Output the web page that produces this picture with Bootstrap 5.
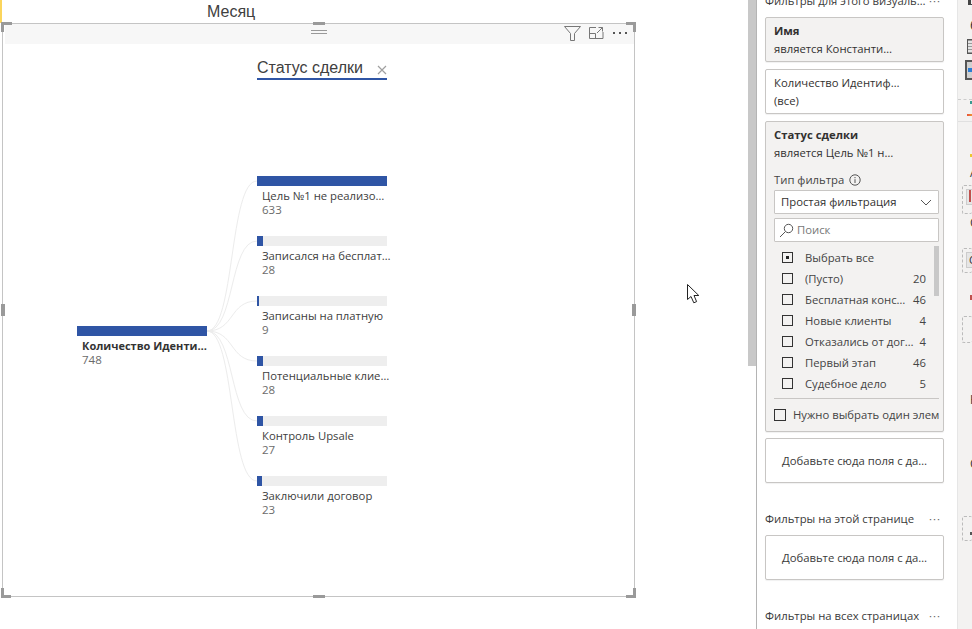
<!DOCTYPE html>
<html lang="ru">
<head>
<meta charset="utf-8">
<title>Дерево декомпозиции</title>
<link href="https://cdn.jsdelivr.net/npm/bootstrap@5.3.0/dist/css/bootstrap.min.css" rel="stylesheet">
<style>
html,body{width:972px;height:629px;overflow:hidden;background:#fff;margin:0}
body{font-family:"Open Sans","Noto Sans",sans-serif;font-size:11.3px;color:#323130;position:relative}
.stagearea{width:748px;height:629px;flex:none;position:relative}
.yellowtick{position:absolute;left:0;top:0;width:2px;height:23px;background:#fbd55c}
.monthtitle{height:23px;padding-left:207px;font:16px/23px "Liberation Sans",sans-serif;color:#404040}
.visframe{width:633px;height:574px;margin-left:2px;border:1px solid #c4c4c4;position:relative}
.vishead{height:20px;margin-left:2px;background:#f7f7f7;position:relative}
.grip{position:absolute;left:306px;top:6px;width:16px;height:4px;border-top:1px solid #999;border-bottom:1px solid #999}
.headicons{position:absolute;left:559px;top:1px}
.hnd{position:absolute;background:#9a9a9a}
.hnd-tlh{left:-2px;top:-2px;width:11px;height:3px}.hnd-tlv{left:-2px;top:-2px;width:3px;height:10px}
.hnd-trh{right:-2px;top:-2px;width:10px;height:3px}.hnd-trv{right:-2px;top:-2px;width:3px;height:10px}
.hnd-blh{left:-2px;bottom:-2px;width:10px;height:3px}.hnd-blv{left:-2px;bottom:-2px;width:3px;height:10px}
.hnd-brh{right:-2px;bottom:-2px;width:10px;height:3px}.hnd-brv{right:-2px;bottom:-2px;width:3px;height:10px}
.hnd-tm{left:310px;top:-2px;width:12px;height:3px}.hnd-bm{left:310px;bottom:-2px;width:12px;height:3px}
.hnd-lm{left:-2px;top:280px;width:4px;height:12px}.hnd-rm{right:-2px;top:280px;width:4px;height:12px}
.treearea{padding-left:74px;position:relative}
.treelines{position:absolute;left:0;top:0;pointer-events:none}
.rootcol{width:130px;margin-top:282px;flex:none;position:relative}
.leafcol{width:130px;margin-left:50px;margin-top:14px;flex:none;position:relative}
.levelhead{height:22px;border-bottom:2px solid #2f55a5;font:16px/19px "Liberation Sans",sans-serif;color:#404040;margin-bottom:96px;position:relative}
.levelclose{position:absolute;right:0;top:7px}
.treenode{height:60px}
.nodebar{height:10px;background:#eee}
.nodefill{height:10px;background:#2f55a5}
.nodename{padding-left:5px;margin-top:3px;font-size:11.3px;line-height:14px;color:#404040;white-space:nowrap}
.rootcol .nodename{font-weight:700;color:#333;font-size:11px}
.nodeval{padding-left:5px;font-size:11.5px;line-height:14px;color:#6b6b6b}
.cursorpos{position:absolute;left:687px;top:284px}
.scrolltrack{width:8px;flex:none}
.scrollthumb{height:366px;background:#c8c8c8}
.filterpane{width:201px;flex:none;border-left:1px solid #b4b4b4;height:629px;overflow:hidden;padding:0 13px 0 8px}
.panehead{display:flex;justify-content:space-between;height:16px;line-height:16px;white-space:nowrap;color:#3a3a3a}
.panehead-top{margin-top:-7px;margin-bottom:8px}
.panehead-b{margin-top:28px;margin-bottom:8px}
.panedots{color:#666;letter-spacing:1px;padding-right:3px}
.fcard{border:1px solid #c8c6c4;border-radius:2px;margin-bottom:7px;padding:4px 8px 0 8px;height:45px;line-height:18px;white-space:nowrap;overflow:hidden;background:#fff;box-shadow:0 1px 1px rgba(0,0,0,.06)}
.fcard-grey{background:#f3f2f1}
.fcard-open{height:311px;padding-right:4px;margin-bottom:6px}
.fcard-drop{display:flex;align-items:center;justify-content:center;margin-bottom:0;padding:0;color:#3a3a3a}
.fname{font-weight:700}
.ftype{margin-top:8px;height:19px;display:flex;align-items:center;gap:5px;color:#444}
.fbox{height:24px;border:1px solid #c8c6c4;background:#fff;border-radius:1px;display:flex;align-items:center;justify-content:space-between;padding:0 6px 0 6px;margin-bottom:4px;margin-top:1px}
.fbox-search{justify-content:flex-start;gap:3px;padding-left:4px;color:#777;margin-bottom:0;margin-top:0}
.flist{position:relative;height:152px;margin-top:5px;border-bottom:1px solid #c8c6c4}
.flist-thumb{position:absolute;right:0;top:-1px;width:5px;height:50px;background:#c8c8c8}
.frow{height:21px;display:flex;align-items:center;padding-left:8px;color:#444}
.cbx{width:11px;height:11px;border:1px solid #333;flex:none;background:#f3f2f1;display:flex;align-items:center;justify-content:center}
.cbx-dot{width:3px;height:3px;background:#222}
.frow-name{margin-left:12px;flex:1;min-width:0;overflow:hidden;white-space:nowrap}
.frow-num{text-align:right;margin-left:4px;margin-right:13px;flex:none}
.fone{display:flex;align-items:center;gap:7px;margin-top:7px;overflow:hidden;white-space:nowrap;color:#444}
.fone .cbx{width:12px;height:12px}
.sidestrip{flex:1;background:#f3f2f1;border-left:1px solid #e6e6e6;height:629px;overflow:hidden;color:#333}
.st-a{height:5px;margin-left:10px;border-left:3px solid #444;border-bottom:1px solid #444}
.st-six{font-size:14px;line-height:16px;margin:12px 0 0 12px;height:16px}
.st-table{height:15px;width:20px;margin:6px 0 0 9px;border:1px solid #555;padding:2px;background:repeating-linear-gradient(0deg,#999 0 1px,#e4e4e4 1px 3px)}
.st-sel{height:20px;width:20px;margin:6px 0 0 7px;border:2px solid #555;background:#d0d0d0;padding:6px 0 0 1px}
.st-selb{height:4px;width:5px;background:#2b7cd3}
.st-dash{border-top:1px dashed #ccc;margin-top:19px}
.st-teal{width:4px;height:3px;margin:1px 0 0 12px;background:#3a9a90}
.st-orange{width:6px;height:2px;margin:10px 0 0 9px;background:linear-gradient(90deg,#e8503a,#f0a030)}
.st-line{border-top:1px solid #e0e0e0;margin-top:5px}
.st-yellow{width:3px;height:3px;margin:32px 0 0 12px;background:#eec52e}
.st-letter{font-size:12px;line-height:14px;margin-left:12px}
.st-la{margin-top:9px}
.dbox{margin-left:4px;border:1px dashed #bbb;border-right:0;border-radius:2px;padding:3px 0 0 3px}
.dbox-inner{height:16px;background:#e6e6e6;border:1px solid #ccc;border-right:0;padding-left:2px}
.dtick{display:block;width:2px;height:12px;background:#c0504d}
.dglyph{display:block;font-size:11px;line-height:14px}
.db1{height:29px;margin-top:5px}
.st-lc{margin-top:2px}
.db2{height:25px;margin-top:18px}
.st-red{width:3px;height:5px;margin:22px 0 0 12px;background:#c0504d}
.db3{height:27px;margin-top:16px}
.st-ln{margin-top:50px}
.st-lo{margin-top:50px}
.db4{height:25px;margin-top:45px;padding:15px 0 0 7px}
.dmini{display:block;width:3px;height:3px;background:#555}
</style>
</head>
<body>
<div class="d-flex">
  <main class="stagearea">
    <div class="yellowtick"></div>
    <div class="monthtitle">Месяц</div>
    <section class="visframe">
      <div class="vishead">
        <div class="grip"></div>
        <svg class="headicons" width="70" height="18" viewBox="0 0 70 18" fill="none" stroke="#777" stroke-width="1">
          <path d="M.5 1.5H16.5L10.5 8.5V15.5H6.5V8.5Z"/>
          <path d="M25.5 2.5H32M39 7V13.5H25.5V2.5M25.5 8.5H31.5V13.5M33 8L38.5 2.5M34.5 2.5H38.5V6.5"/>
          <path d="M49 8h2M55 8h2M61 8h2" stroke="#555" stroke-width="2"/>
        </svg>
      </div>
      <div class="d-flex treearea">
        <svg class="treelines" width="631" height="552" viewBox="0 0 631 552" fill="none" stroke="#ececec" stroke-width="1">
          <path d="M204 287C232 287 226 137 254 137"/>
          <path d="M204 287C232 287 226 197 254 197"/>
          <path d="M204 287C232 287 226 257 254 257"/>
          <path d="M204 287C232 287 226 317 254 317"/>
          <path d="M204 287C232 287 226 377 254 377"/>
          <path d="M204 287C232 287 226 437 254 437"/>
        </svg>
        <div class="rootcol">
          <div class="nodebar"><div class="nodefill w-100"></div></div>
          <div class="nodename">Количество Иденти…</div>
          <div class="nodeval">748</div>
        </div>
        <div class="leafcol">
          <div class="levelhead">Статус сделки
            <svg class="levelclose" width="10" height="10" viewBox="0 0 10 10" stroke="#a0a0a0" stroke-width="1.2" fill="none"><path d="M1 1l8 8M9 1l-8 8"/></svg>
          </div>
          <div class="treenode">
            <div class="nodebar"><div class="nodefill w-100"></div></div>
            <div class="nodename">Цель №1 не реализо…</div>
            <div class="nodeval">633</div>
          </div>
          <div class="treenode">
            <div class="nodebar"><div class="nodefill" style="width:6px"></div></div>
            <div class="nodename">Записался на бесплат…</div>
            <div class="nodeval">28</div>
          </div>
          <div class="treenode">
            <div class="nodebar"><div class="nodefill" style="width:2px"></div></div>
            <div class="nodename">Записаны на платную</div>
            <div class="nodeval">9</div>
          </div>
          <div class="treenode">
            <div class="nodebar"><div class="nodefill" style="width:6px"></div></div>
            <div class="nodename">Потенциальные клие…</div>
            <div class="nodeval">28</div>
          </div>
          <div class="treenode">
            <div class="nodebar"><div class="nodefill" style="width:6px"></div></div>
            <div class="nodename">Контроль Upsale</div>
            <div class="nodeval">27</div>
          </div>
          <div class="treenode">
            <div class="nodebar"><div class="nodefill" style="width:5px"></div></div>
            <div class="nodename">Заключили договор</div>
            <div class="nodeval">23</div>
          </div>
        </div>
      </div>
      <i class="hnd hnd-tlh"></i><i class="hnd hnd-tlv"></i>
      <i class="hnd hnd-trh"></i><i class="hnd hnd-trv"></i>
      <i class="hnd hnd-blh"></i><i class="hnd hnd-blv"></i>
      <i class="hnd hnd-brh"></i><i class="hnd hnd-brv"></i>
      <i class="hnd hnd-tm"></i><i class="hnd hnd-bm"></i>
      <i class="hnd hnd-lm"></i><i class="hnd hnd-rm"></i>
    </section>
    <svg class="cursorpos" width="13" height="20" viewBox="0 0 13 20"><path d="M.5.5V15.5L4 12.5 6.8 18.8 9.6 17.6 7 11.5H11.8Z" fill="#fff" stroke="#222" stroke-width="1"/></svg>
  </main>
  <div class="scrolltrack"><div class="scrollthumb"></div></div>
  <aside class="filterpane">
    <div class="panehead panehead-top"><span>Фильтры для этого визуаль…</span><span class="panedots">···</span></div>
    <div class="fcard fcard-grey"><div class="fname">Имя</div><div>является Константи…</div></div>
    <div class="fcard"><div>Количество Идентиф…</div><div>(все)</div></div>
    <div class="fcard fcard-grey fcard-open">
      <div class="fname">Статус сделки</div>
      <div>является Цель №1 н…</div>
      <div class="ftype">Тип фильтра
        <svg width="12" height="12" viewBox="0 0 12 12" fill="none" stroke="#555"><circle cx="6" cy="6" r="5.2"/><path d="M6 5.2V9M6 3v1.2"/></svg>
      </div>
      <div class="fbox"><span>Простая фильтрация</span>
        <svg width="12" height="7" viewBox="0 0 12 7" fill="none" stroke="#555"><path d="M1 1l5 5 5-5"/></svg>
      </div>
      <div class="fbox fbox-search">
        <svg width="15" height="15" viewBox="0 0 15 15" fill="none" stroke="#555"><circle cx="9.5" cy="5.5" r="4.2"/><path d="M6.5 8.5L1 14"/></svg>
        <span>Поиск</span>
      </div>
      <div class="flist">
        <div class="flist-thumb"></div>
        <div class="frow"><span class="cbx"><span class="cbx-dot"></span></span><span class="frow-name">Выбрать все</span></div>
        <div class="frow"><span class="cbx"></span><span class="frow-name">(Пусто)</span><span class="frow-num">20</span></div>
        <div class="frow"><span class="cbx"></span><span class="frow-name">Бесплатная конс…</span><span class="frow-num">46</span></div>
        <div class="frow"><span class="cbx"></span><span class="frow-name">Новые клиенты</span><span class="frow-num">4</span></div>
        <div class="frow"><span class="cbx"></span><span class="frow-name">Отказались от дог…</span><span class="frow-num">4</span></div>
        <div class="frow"><span class="cbx"></span><span class="frow-name">Первый этап</span><span class="frow-num">46</span></div>
        <div class="frow"><span class="cbx"></span><span class="frow-name">Судебное дело</span><span class="frow-num">5</span></div>
      </div>
      <div class="fone"><span class="cbx"></span><span>Нужно выбрать один элемент</span></div>
    </div>
    <div class="fcard fcard-drop">Добавьте сюда поля с да…</div>
    <div class="panehead panehead-b"><span>Фильтры на этой странице</span><span class="panedots">···</span></div>
    <div class="fcard fcard-drop">Добавьте сюда поля с да…</div>
    <div class="panehead panehead-b"><span>Фильтры на всех страницах</span><span class="panedots">···</span></div>
  </aside>
  <div class="sidestrip">
    <div class="st-a"></div>
    <div class="st-six">6</div>
    <div class="st-table"></div>
    <div class="st-sel"><div class="st-selb"></div></div>
    <div class="st-dash"></div>
    <div class="st-teal"></div>
    <div class="st-orange"></div>
    <div class="st-line"></div>
    <div class="st-yellow"></div>
    <div class="st-letter st-la">А</div>
    <div class="dbox db1"><div class="dbox-inner"><span class="dtick"></span></div></div>
    <div class="st-letter st-lc">С</div>
    <div class="dbox db2"><div class="dbox-inner"><span class="dglyph">С</span></div></div>
    <div class="st-red"></div>
    <div class="dbox db3"></div>
    <div class="st-letter st-ln">Н</div>
    <div class="st-letter st-lo">С</div>
    <div class="dbox db4"><span class="dmini"></span></div>
  </div>
</div>
<script src="https://cdn.jsdelivr.net/npm/bootstrap@5.3.0/dist/js/bootstrap.bundle.min.js"></script>
</body>
</html>
